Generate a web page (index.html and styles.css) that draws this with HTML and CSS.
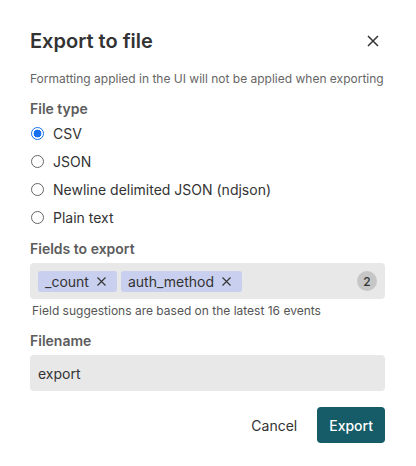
FILE: index.html
```html
<!DOCTYPE html>
<html lang="en">
<head>
<meta charset="utf-8">
<title>Export to file</title>
<link rel="stylesheet" href="styles.css">
</head>
<body>
<div class="dialog">
  <div class="header">
    <h1 class="title">Export to file</h1>
    <button class="close" aria-label="Close">
      <svg width="12" height="12" viewBox="0 0 12 12"><path d="M1 1 L11 11 M11 1 L1 11" stroke="#333" stroke-width="1.5" fill="none"/></svg>
    </button>
  </div>
  <p class="note">Formatting applied in the UI will not be applied when exporting</p>

  <div class="label">File type</div>
  <div class="radios">
    <label class="radio"><span class="dot checked"></span><span>CSV</span></label>
    <label class="radio"><span class="dot"></span><span>JSON</span></label>
    <label class="radio"><span class="dot"></span><span>Newline delimited JSON (ndjson)</span></label>
    <label class="radio"><span class="dot"></span><span>Plain text</span></label>
  </div>

  <div class="label label-gap">Fields to export</div>
  <div class="tagbox">
    <span class="tag">_count<svg class="tag-x" width="9" height="9" viewBox="0 0 9 9"><path d="M0.5 0.5 L8.5 8.5 M8.5 0.5 L0.5 8.5" stroke="#333" stroke-width="1.1" fill="none"/></svg></span>
    <span class="tag">auth_method<svg class="tag-x" width="9" height="9" viewBox="0 0 9 9"><path d="M0.5 0.5 L8.5 8.5 M8.5 0.5 L0.5 8.5" stroke="#333" stroke-width="1.1" fill="none"/></svg></span>
    <span class="count">2</span>
  </div>
  <p class="help">Field suggestions are based on the latest 16 events</p>

  <div class="label label-gap2">Filename</div>
  <div class="input">export</div>

  <div class="actions">
    <button class="btn btn-text">Cancel</button>
    <button class="btn btn-primary">Export</button>
  </div>
</div>
</body>
</html>
```
FILE: styles.css
```css
* { box-sizing: border-box; }
html, body { margin: 0; padding: 0; background: #fff; }
body {
  font-family: Inter, "Noto Sans", "Liberation Sans", sans-serif;
  color: #333;
  width: 416px;
  height: 466px;
  overflow: hidden;
}
.dialog {
  padding: 29px 31px 0 30px;
}
.header {
  display: flex;
  align-items: center;
  justify-content: space-between;
  height: 24px;
}
.title {
  margin: 0;
  font-size: 20px;
  line-height: 24px;
  font-weight: 600;
  color: #333;
}
.close {
  width: 24px;
  height: 24px;
  border: 0;
  background: none;
  padding: 0;
  display: flex;
  align-items: center;
  justify-content: center;
  margin-right: 0;
}
.note {
  margin: 18px 0 0;
  font-size: 12px;
  line-height: 16px;
  color: #666;
}
.label {
  margin-top: 12px;
  font-size: 14px;
  line-height: 20px;
  font-weight: 600;
  color: #5c5c5c;
}
.label-gap { margin-top: 8px; }
.label-gap2 { margin-top: 12px; }
.radios {
  display: flex;
  flex-direction: column;
}
.radio {
  display: flex;
  align-items: center;
  height: 28px;
  font-size: 14px;
  color: #333;
  gap: 9px;
}
.dot {
  width: 13px;
  height: 13px;
  border-radius: 50%;
  border: 1px solid #666;
  background: #fff;
  flex: none;
  margin-left: 1px;
}
.dot.checked {
  border: 1.5px solid #1670f0;
  background: radial-gradient(circle, #1670f0 0 3.6px, #fff 4.2px);
}
.tagbox {
  margin-top: 4px;
  height: 36px;
  background: #e8e8e8;
  border-radius: 4px;
  display: flex;
  align-items: center;
  padding: 0 8px;
  gap: 4px;
}
.tag {
  display: inline-flex;
  align-items: center;
  height: 21px;
  background: #c9cfee;
  border-radius: 3px;
  padding: 0 11px 0 7px;
  font-size: 14px;
  color: #333;
  gap: 8px;
}
.tag-x { flex: none; }
.count {
  margin-left: auto;
  width: 20px;
  height: 20px;
  border-radius: 50%;
  background: #c6c6c6;
  font-size: 12px;
  font-weight: 500;
  display: flex;
  align-items: center;
  justify-content: center;
  color: #333;
}
.help {
  margin: 4px 0 0 2px;
  font-size: 12px;
  line-height: 16px;
  color: #555;
}
.input {
  margin-top: 4px;
  height: 36px;
  background: #e8e8e8;
  border-radius: 4px;
  display: flex;
  align-items: center;
  padding: 0 8px;
  font-size: 14px;
  color: #333;
}
.actions {
  margin-top: 16px;
  display: flex;
  justify-content: flex-end;
  gap: 8px;
}
.btn {
  height: 36px;
  border: 0;
  border-radius: 4px;
  padding: 0 12px;
  font-family: inherit;
  font-size: 14px;
}
.btn-text {
  background: none;
  color: #333;
}
.btn-primary {
  background: #155c68;
  color: #fff;
  font-weight: 500;
}
```
